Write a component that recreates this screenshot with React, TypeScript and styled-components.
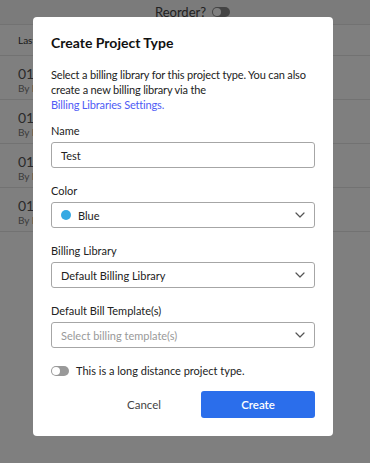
import React from 'react';
import styled, { createGlobalStyle } from 'styled-components';

const GlobalStyle = createGlobalStyle`
  html, body {
    margin: 0;
    padding: 0;
    background: #fff;
  }
  body {
    font-family: Lato, "Liberation Sans", sans-serif;
    color: #222;
  }
  * { box-sizing: border-box; }
`;

const Page = styled.div`
  position: relative;
  width: 370px;
  height: 463px;
  overflow: hidden;
  background: #fff;
`;

const TopBar = styled.div`
  height: 25px;
  padding-left: 15px;
  background: #f6f6f6;
  border-bottom: 1px solid #e4e4e4;
  display: flex;
  align-items: center;
  justify-content: center;
  gap: 6px;
  font-size: 13px;
  color: #444;
`;

const BgToggle = styled.span`
  width: 18px;
  height: 10px;
  border-radius: 5px;
  background: #888;
  position: relative;
  &::after {
    content: '';
    position: absolute;
    left: 1px;
    top: 1px;
    width: 8px;
    height: 8px;
    border-radius: 50%;
    background: #fff;
  }
`;

const TableHead = styled.div`
  height: 31px;
  padding-left: 18px;
  display: flex;
  align-items: center;
  font-size: 10px;
  color: #333;
  border-bottom: 1px solid #e4e4e4;
`;

const TableRow = styled.div`
  height: 44px;
  padding: 10px 0 0 18px;
  border-bottom: 1px solid #e4e4e4;
  display: flex;
  flex-direction: column;
`;

const RowDate = styled.span`
  font-size: 14px;
  color: #555;
  line-height: 16px;
`;

const RowBy = styled.span`
  font-size: 10px;
  color: #777;
  line-height: 12px;
`;

const Overlay = styled.div`
  position: absolute;
  inset: 0;
  background: rgba(0, 0, 0, 0.5);
  padding: 17px 0 0 33px;
`;

const Modal = styled.div`
  width: 300px;
  background: #fff;
  border-radius: 4px;
  padding: 17px 18px 18px;
  display: flex;
  flex-direction: column;
`;

const Title = styled.h2`
  margin: 0;
  font-size: 14px;
  line-height: 18px;
  font-weight: 700;
  color: #111;
`;

const Description = styled.p`
  margin: 15px 0 11px;
  font-size: 11px;
  line-height: 15px;
  letter-spacing: -0.16px;
  color: #222;
`;

const Link = styled.a`
  display: block;
  color: #4f5bf5;
  text-decoration: none;
`;

const Field = styled.div`
  display: flex;
  flex-direction: column;
  margin-bottom: 15px;
`;

const Label = styled.label`
  font-size: 11px;
  line-height: 15px;
  color: #222;
  margin-bottom: 4px;
`;

const Box = styled.div<{ $placeholder?: boolean }>`
  height: 26px;
  border: 1px solid #a6a6a6;
  border-radius: 3px;
  padding: 0 9px 0 9px;
  display: flex;
  align-items: center;
  gap: 7px;
  font-size: 11px;
  color: ${(p) => (p.$placeholder ? '#999' : '#222')};
`;

const BoxText = styled.span`
  flex: 1;
`;

const Dot = styled.span<{ $color: string }>`
  width: 10px;
  height: 10px;
  border-radius: 50%;
  background: ${(p) => p.$color};
`;

const ToggleRow = styled.div`
  display: flex;
  align-items: center;
  gap: 7px;
  font-size: 11px;
  line-height: 15px;
  color: #222;
`;

const Switch = styled.span`
  width: 18px;
  height: 10px;
  border-radius: 5px;
  background: #999;
  position: relative;
  &::after {
    content: '';
    position: absolute;
    left: 1px;
    top: 1px;
    width: 8px;
    height: 8px;
    border-radius: 50%;
    background: #fff;
  }
`;

const Actions = styled.div`
  display: flex;
  justify-content: flex-end;
  margin-top: 13px;
`;

const Button = styled.button<{ $primary?: boolean }>`
  width: 114px;
  height: 27px;
  border: none;
  border-radius: 3px;
  font-family: inherit;
  font-size: 11.5px;
  cursor: pointer;
  background: ${(p) => (p.$primary ? '#2b6eeb' : 'transparent')};
  color: ${(p) => (p.$primary ? '#fff' : '#444')};
  font-weight: ${(p) => (p.$primary ? 600 : 400)};
`;

const Chevron = () => (
  <svg width="10" height="6" viewBox="0 0 10 6" fill="none">
    <path d="M1 1l4 4 4-4" stroke="#555" strokeWidth="1.2" strokeLinecap="round" strokeLinejoin="round" />
  </svg>
);

const App = () => {
  const rows = [0, 1, 2, 3];

  return (
    <Page>
      <GlobalStyle />
      <TopBar>
        Reorder? <BgToggle />
      </TopBar>
      <TableHead>Last Updated</TableHead>
      {rows.map((r) => (
        <TableRow key={r}>
          <RowDate>01/12/2023</RowDate>
          <RowBy>By Ian</RowBy>
        </TableRow>
      ))}

      <Overlay>
        <Modal>
          <Title>Create Project Type</Title>
          <Description>
            Select a billing library for this project type. You can also create a new billing library via the
            <Link href="#">Billing Libraries Settings.</Link>
          </Description>

          <Field>
            <Label>Name</Label>
            <Box>
              <BoxText>Test</BoxText>
            </Box>
          </Field>

          <Field>
            <Label>Color</Label>
            <Box>
              <Dot $color="#35a9e3" />
              <BoxText>Blue</BoxText>
              <Chevron />
            </Box>
          </Field>

          <Field>
            <Label>Billing Library</Label>
            <Box>
              <BoxText>Default Billing Library</BoxText>
              <Chevron />
            </Box>
          </Field>

          <Field>
            <Label>Default Bill Template(s)</Label>
            <Box $placeholder>
              <BoxText>Select billing template(s)</BoxText>
              <Chevron />
            </Box>
          </Field>

          <ToggleRow>
            <Switch />
            This is a long distance project type.
          </ToggleRow>

          <Actions>
            <Button>Cancel</Button>
            <Button $primary>Create</Button>
          </Actions>
        </Modal>
      </Overlay>
    </Page>
  );
};

export default App;
